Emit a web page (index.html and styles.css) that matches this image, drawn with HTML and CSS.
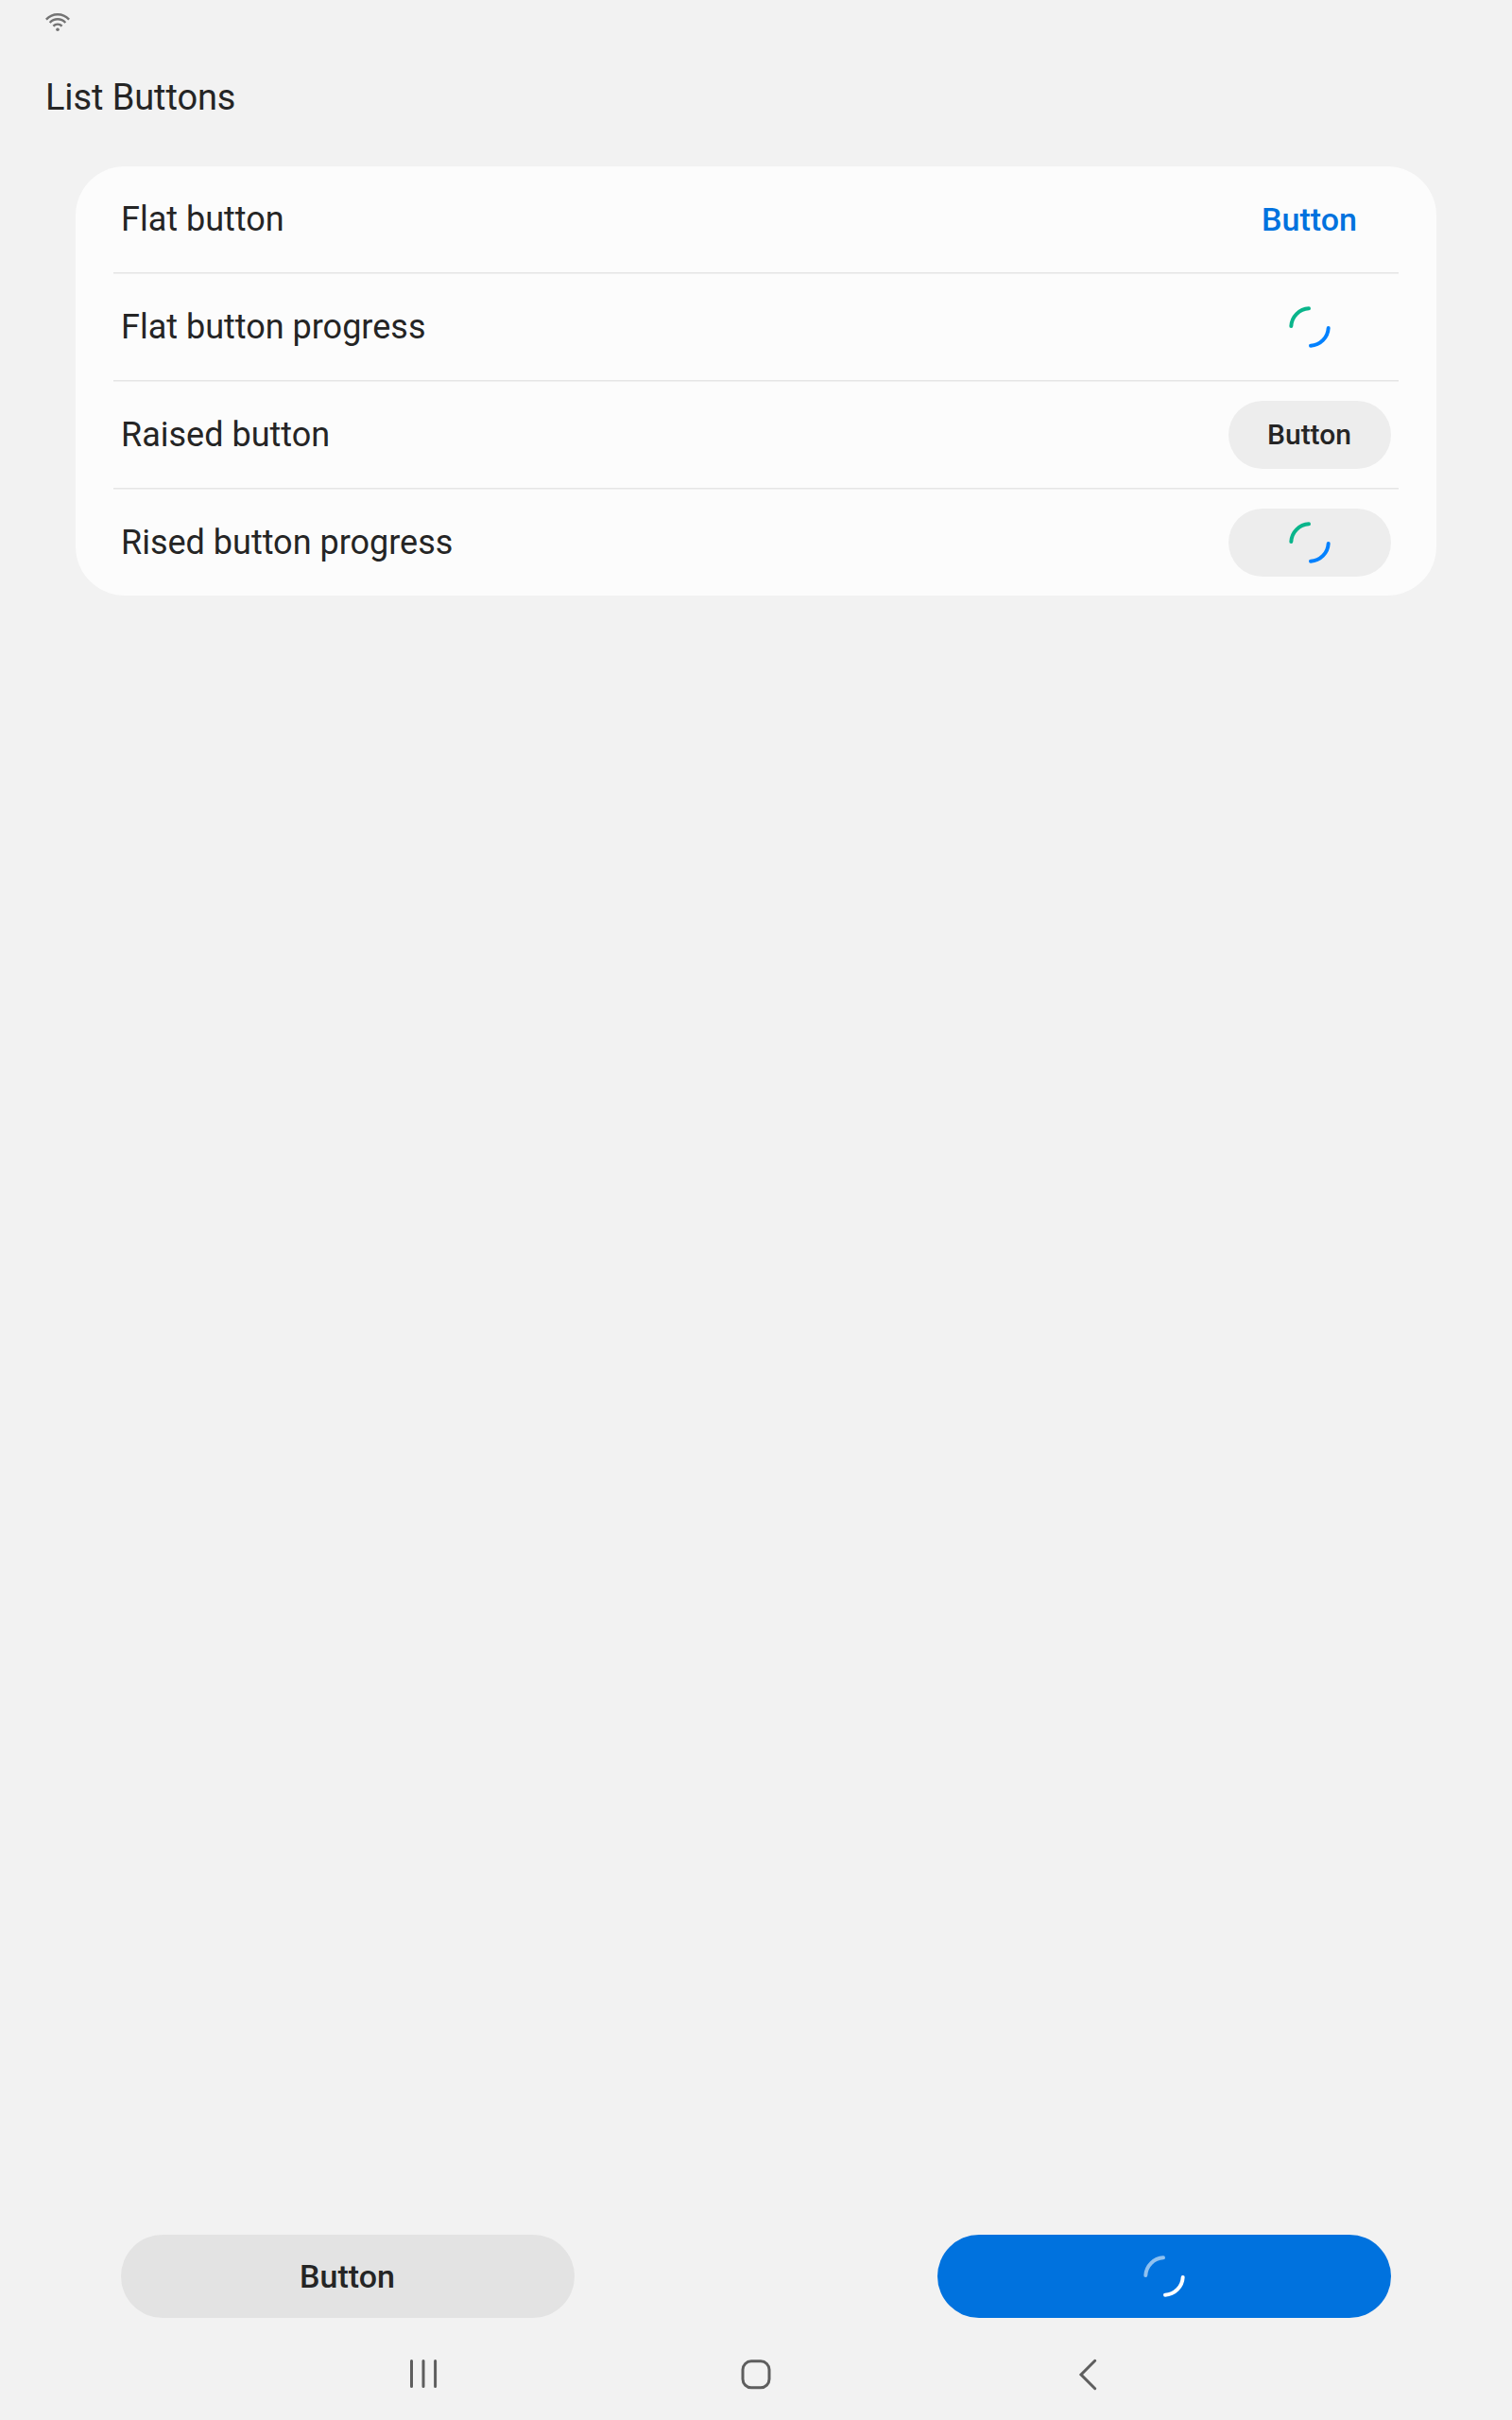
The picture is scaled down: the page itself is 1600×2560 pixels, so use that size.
FILE: index.html
```html
<!DOCTYPE html>
<html lang="en">
<head>
<meta charset="utf-8">
<title>List Buttons</title>
<link rel="stylesheet" href="styles.css">
</head>
<body>
<div class="screen">
  <div class="status-bar">
    <svg class="wifi" width="26" height="20" viewBox="0 0 26 20">
      <path d="M0.900 6.600Q6 1.200 13 1.200T25.100 6.600M4.700 10Q8.200 6.300 13 6.300T21.300 10M8.400 13.600Q10.300 11.600 13 11.600T17.600 13.600"/>
      <circle cx="13" cy="17.300" r="1.800"/>
    </svg>
  </div>
  <h1 class="title">List Buttons</h1>

  <main class="card">
    <div class="row">
      <span class="label">Flat button</span>
      <button class="btn btn-flat">Button</button>
    </div>
    <div class="row">
      <span class="label">Flat button progress</span>
      <button class="btn btn-loading" aria-label="Loading">
        <svg class="spinner" width="44" height="44" viewBox="0 0 44 44">
          <path class="arc-a" d="M2.320 21A19.700 19.700 0 0 1 21 2.320"/>
          <path class="arc-b" d="M41.680 23A19.700 19.700 0 0 1 23 41.680"/>
        </svg>
      </button>
    </div>
    <div class="row">
      <span class="label">Raised button</span>
      <button class="btn btn-raised">Button</button>
    </div>
    <div class="row">
      <span class="label">Rised button progress</span>
      <button class="btn btn-raised btn-loading" aria-label="Loading">
        <svg class="spinner" width="44" height="44" viewBox="0 0 44 44">
          <path class="arc-a" d="M2.320 21A19.700 19.700 0 0 1 21 2.320"/>
          <path class="arc-b" d="M41.680 23A19.700 19.700 0 0 1 23 41.680"/>
        </svg>
      </button>
    </div>
  </main>

  <footer class="actions">
    <button class="btn btn-wide">Button</button>
    <button class="btn btn-wide btn-primary btn-loading" aria-label="Loading">
      <svg class="spinner" width="44" height="44" viewBox="0 0 44 44">
        <path class="arc-a" d="M2.320 21A19.700 19.700 0 0 1 21 2.320"/>
        <path class="arc-b" d="M41.680 23A19.700 19.700 0 0 1 23 41.680"/>
      </svg>
    </button>
  </footer>

  <nav class="nav-bar">
    <svg width="36" height="36" viewBox="0 0 36 36"><path d="M5.500 3.500V30.500M18 3.500V30.500M30.600 3.500V30.500"/></svg>
    <svg width="36" height="36" viewBox="0 0 36 36"><rect x="4" y="3.800" width="28" height="28" rx="9"/></svg>
    <svg width="36" height="36" viewBox="0 0 36 36"><path d="M24.700 3.300L10 18L24.700 32.700"/></svg>
  </nav>
</div>
</body>
</html>
```
FILE: styles.css
```css
* {
  box-sizing: border-box;
}

body {
  margin: 0;
  background: #f2f2f2;
  color: #252525;
  font-family: Roboto, sans-serif;
}

.screen {
  display: flex;
  flex-direction: column;
  width: 1600px;
  height: 2560px;
}

.status-bar {
  height: 48px;
  padding: 14px 48px 0;
}

.wifi {
  display: block;
  fill: #737373;
}

.wifi path {
  fill: none;
  stroke: #737373;
  stroke-width: 2.4;
}

.title {
  height: 128px;
  margin: 0;
  padding-left: 48px;
  font-size: 38px;
  font-weight: 400;
  letter-spacing: -0.1px;
  line-height: 111px;
}

.card {
  margin: 0 80px;
  border-radius: 52px;
  background: #fcfcfc;
}

.row {
  display: flex;
  align-items: center;
  justify-content: space-between;
  height: 112px;
  padding: 0 48px;
}

.row + .row {
  height: 114px;
  padding-top: 2px;
  background: linear-gradient(#e5e5e5 1px, #f0f0f0 1px) no-repeat 40px 0 / 1360px 2px;
}

.label {
  font-size: 36px;
}

.btn {
  display: flex;
  align-items: center;
  justify-content: center;
  width: 172px;
  height: 72px;
  padding: 0 1px 0 0;
  border: 0;
  border-radius: 36px;
  background: none;
  color: inherit;
  font: 500 34px Roboto, sans-serif;
}

.btn-flat {
  color: #0072de;
}

.btn-raised {
  padding-bottom: 1px;
  background: #ededed;
  font-size: 30px;
}

.btn-loading {
  padding: 0;
}

.spinner {
  display: block;
  fill: none;
  stroke-width: 4;
  stroke-linecap: round;
}

.arc-a {
  stroke: #0ab58b;
}

.arc-b {
  stroke: #0381fe;
}

.actions {
  display: flex;
  justify-content: space-between;
  margin-top: auto;
  padding: 0 128px 12px;
}

.btn-wide {
  width: 480px;
  height: 88px;
  border-radius: 44px;
  background: #e3e3e3;
}

.btn-primary {
  background: #0072de;
}

.btn-primary .arc-a {
  stroke: #8fc1f0;
}

.btn-primary .arc-b {
  stroke: #fff;
}

.nav-bar {
  display: grid;
  grid-template-columns: repeat(3, 352px);
  place-content: center;
  place-items: center;
  height: 96px;
  fill: none;
  stroke: #5e5e5e;
  stroke-width: 3;
  stroke-linecap: round;
}
```
